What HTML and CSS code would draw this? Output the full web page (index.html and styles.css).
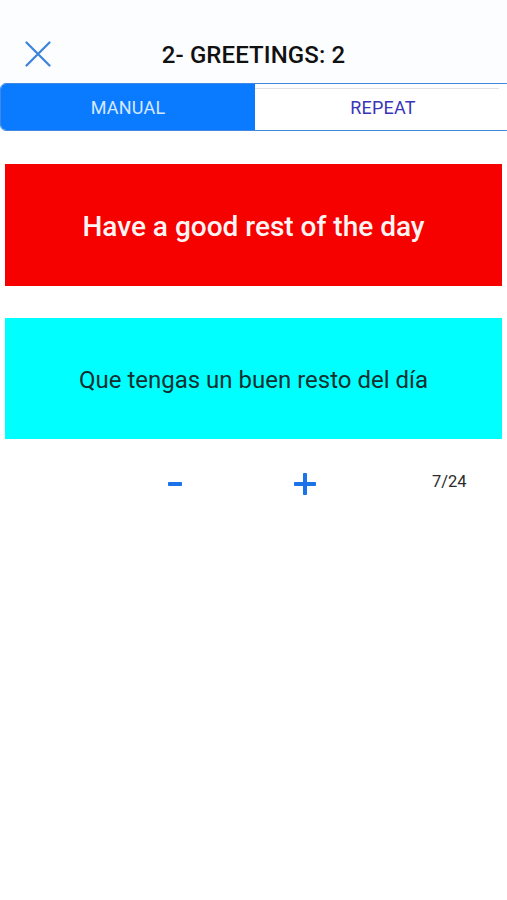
FILE: index.html
```html
<!DOCTYPE html>
<html>
<head>
<meta charset="utf-8">
<link rel="stylesheet" href="styles.css">
</head>
<body>
<div class="screen">
  <header class="topbar">
    <button class="close" aria-label="close">
      <svg width="26" height="26" viewBox="0 0 26 26"><path d="M1.5 1.5 L24.5 24.5 M24.5 1.5 L1.5 24.5" stroke="#3b82d9" stroke-width="2.2" stroke-linecap="round" fill="none"/></svg>
    </button>
    <h1 class="title">2- GREETINGS: 2</h1>
  </header>
  <div class="segmented">
    <div class="seg seg-active">MANUAL</div>
    <div class="seg seg-idle">REPEAT</div>
  </div>
  <div class="card card-red">Have a good rest of the day</div>
  <div class="card card-cyan">Que tengas un buen resto del día</div>
  <div class="controls">
    <span class="ctl ctl-minus"><svg width="16" height="6" viewBox="0 0 16 6"><rect x="1" y="1" width="14" height="4" rx="0.8" fill="#1a73e8"/></svg></span>
    <span class="ctl ctl-plus"><svg width="24" height="24" viewBox="0 0 24 24"><rect x="1" y="10" width="22" height="4" rx="0.8" fill="#1a73e8"/><rect x="10" y="1" width="4" height="22" rx="0.8" fill="#1a73e8"/></svg></span>
    <span class="count">7/24</span>
  </div>
</div>
</body>
</html>
```
FILE: styles.css
```css
html, body {
  margin: 0;
  padding: 0;
  background: #ffffff;
  overflow: hidden;
}
body {
  font-family: Roboto, "Liberation Sans", sans-serif;
  width: 507px;
  height: 900px;
}
.screen {
  display: flex;
  flex-direction: column;
}
.topbar {
  position: relative;
  height: 83px;
  display: flex;
  align-items: center;
  justify-content: center;
  padding-top: 26px;
  box-sizing: border-box;
  background: #fcfdfe;
}
.close {
  position: absolute;
  left: 25px;
  top: 41px;
  border: 0;
  background: none;
  padding: 0;
  width: 26px;
  height: 26px;
  display: block;
}
.close svg { display: block; }
.title {
  margin: 0;
  font-size: 24px;
  font-weight: 500;
  color: #111111;
  letter-spacing: 0.1px;
}
.segmented {
  display: flex;
  width: 512px;
  height: 48px;
  box-sizing: border-box;
  border: 1.5px solid #3f87e0;
  border-radius: 6px;
  overflow: hidden;
}
.seg {
  display: flex;
  align-items: center;
  justify-content: center;
  font-size: 18px;
  letter-spacing: 0.2px;
}
.seg-active {
  width: 254px;
  background: #0a7bff;
  color: #d6e8ff;
}
.seg-idle {
  position: relative;
  flex: 1;
  background: #ffffff;
  color: #3a35b8;
}
.seg-idle::before {
  content: "";
  position: absolute;
  top: 4px;
  left: 0;
  right: 12px;
  height: 1px;
  background: #e2e2e2;
}
.card {
  margin: 0 5px;
  display: flex;
  align-items: center;
  justify-content: center;
  text-align: center;
}
.card-red {
  margin-top: 33px;
  height: 122px;
  padding-top: 3px;
  box-sizing: border-box;
  background: #f60000;
  color: #fff4f4;
  font-size: 28px;
  font-weight: 500;
}
.card-cyan {
  margin-top: 32px;
  height: 121px;
  padding-top: 2px;
  box-sizing: border-box;
  background: #00ffff;
  color: #12302f;
  font-size: 24px;
  font-weight: 400;
}
.controls {
  display: flex;
  align-items: center;
  height: 44px;
  margin-top: 23px;
}
.ctl { display: flex; align-items: center; }
.ctl svg { display: block; }
.ctl-minus { margin-left: 167px; }
.ctl-plus { margin-left: 110px; }
.count {
  margin-left: 115px;
  margin-top: -6px;
  font-size: 16.5px;
  color: #2b2b2b;
}
```
